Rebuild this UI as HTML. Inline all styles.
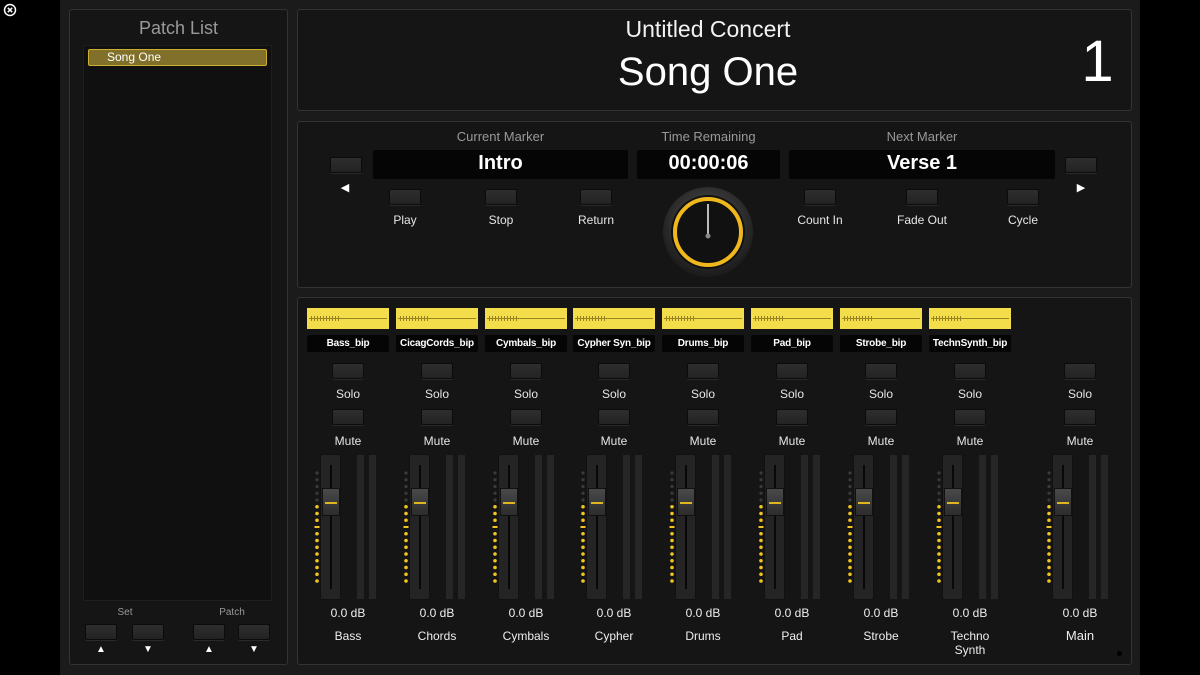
<!DOCTYPE html>
<html><head><meta charset="utf-8">
<style>
*{margin:0;padding:0;box-sizing:border-box}
body{width:1200px;height:675px;background:#000;position:relative;overflow:hidden;font-family:"Liberation Sans","DejaVu Sans",sans-serif;color:#ddd}
.abs{position:absolute}
.main{left:60px;top:0;width:1080px;height:675px;background:#1b1b1b}
.panel{position:absolute;background:#151515;border:1px solid #333;border-radius:3px}
.btn{position:absolute;width:32px;height:16px;background:linear-gradient(#2e2e2e,#232323);border:1px solid #0b0b0b;border-radius:2px;box-shadow:0 1px 0 #2a2a2a}
.t{position:absolute;text-align:center;white-space:nowrap}
.lbl{font-size:12px;color:#e6e6e6}
.ch{position:absolute;top:0;width:82px;height:675px}
.wave{position:absolute;left:0;top:308px;width:82px;height:21px;background:#f3dd4a}
.wave:after{content:"";position:absolute;left:2px;right:2px;top:10px;height:1px;background:#9a8420}
.wave:before{content:"";position:absolute;left:4px;width:30px;top:8px;height:5px;background:repeating-linear-gradient(90deg,#6b5a14 0 1px,transparent 1px 3px);opacity:.7}
.name{position:absolute;left:0;top:335px;width:82px;height:17px;background:#050505;border-radius:2px;font-size:10px;font-weight:bold;color:#fff;text-align:center;line-height:17px;white-space:nowrap;overflow:hidden;letter-spacing:-0.2px}
.track{position:absolute;left:13px;top:454px;width:21px;height:146px;background:#242424;border:1px solid #111;border-radius:2px}
.track:after{content:"";position:absolute;left:9px;top:10px;width:2px;height:124px;background:#080808}
.cap{position:absolute;left:15px;top:488px;width:18px;height:28px;background:linear-gradient(#4a4a4a,#2c2c2c);border:1px solid #111}
.cap:after{content:"";position:absolute;left:2px;right:2px;top:13px;height:2px;background:#e0b520}
.mtr{position:absolute;top:454px;width:9px;height:146px;background:#262626;border:1px solid #151515}
.dots{position:absolute;left:6px;top:468px}
.db{position:absolute;left:0;width:82px;top:606px;text-align:center;font-size:12px;color:#eee}
.cn{position:absolute;left:0;width:82px;top:629px;text-align:center;font-size:12px;color:#eee;line-height:14px}
</style></head><body>
<svg class="abs" style="left:3px;top:3px" width="14" height="14"><circle cx="7" cy="7" r="5.5" fill="none" stroke="#fff" stroke-width="1.5"/><path d="M4.8 4.8L9.2 9.2M9.2 4.8L4.8 9.2" stroke="#fff" stroke-width="1.5"/></svg>
<div class="abs main"></div>

<svg width="0" height="0" style="position:absolute"><defs>
<g id="dd">
<g fill="#3a3a3a"><circle cx="4" cy="5" r="1.6"/><circle cx="4" cy="11.75" r="1.6"/><circle cx="4" cy="18.5" r="1.6"/><circle cx="4" cy="25.25" r="1.6"/><circle cx="4" cy="32" r="1.6"/></g>
<g fill="#f2c51e"><circle cx="4" cy="38.75" r="1.8"/><circle cx="4" cy="45.5" r="1.8"/><circle cx="4" cy="52.25" r="1.8"/><rect x="1.5" y="58" width="5" height="2"/><circle cx="4" cy="65.75" r="1.8"/><circle cx="4" cy="72.5" r="1.8"/><circle cx="4" cy="79.25" r="1.8"/><circle cx="4" cy="86" r="1.8"/><circle cx="4" cy="92.75" r="1.8"/><circle cx="4" cy="99.5" r="1.8"/><circle cx="4" cy="106.25" r="1.8"/><circle cx="4" cy="113" r="1.8"/></g>
</g></defs></svg>

<!-- Patch list -->
<div class="panel" style="left:69px;top:9px;width:219px;height:656px"></div>
<div class="t" style="left:69px;width:219px;top:18px;font-size:18px;color:#9a9a9a">Patch List</div>
<div class="abs" style="left:83px;top:45px;width:189px;height:556px;background:#101010;border:1px solid #1e1e1e"></div>
<div class="abs" style="left:88px;top:49px;width:179px;height:17px;background:#80702a;border:1px solid #cdb030;border-radius:2px;font-size:12px;color:#fff;padding-left:18px;line-height:15px">Song One</div>
<div class="t" style="left:105px;width:40px;top:607px;font-size:10px;color:#999">Set</div>
<div class="t" style="left:210px;width:44px;top:607px;font-size:10px;color:#999">Patch</div>
<div class="btn" style="left:85px;top:624px"></div>
<div class="btn" style="left:132px;top:624px"></div>
<div class="btn" style="left:193px;top:624px"></div>
<div class="btn" style="left:238px;top:624px"></div>
<div class="t" style="left:91px;width:20px;top:644px;font-size:10px;color:#fff">▲</div>
<div class="t" style="left:138px;width:20px;top:644px;font-size:10px;color:#fff">▼</div>
<div class="t" style="left:199px;width:20px;top:644px;font-size:10px;color:#fff">▲</div>
<div class="t" style="left:244px;width:20px;top:644px;font-size:10px;color:#fff">▼</div>

<!-- Header -->
<div class="panel" style="left:297px;top:9px;width:835px;height:102px"></div>
<div class="t" style="left:508px;width:400px;top:16px;font-size:23px;color:#f2f2f2">Untitled Concert</div>
<div class="t" style="left:458px;width:500px;top:50px;font-size:40px;color:#fff">Song One</div>
<div class="t" style="left:1070px;width:55px;top:30px;font-size:58px;color:#fff;line-height:64px">1</div>

<!-- Transport -->
<div class="panel" style="left:297px;top:121px;width:835px;height:167px"></div>
<div class="t" style="left:373px;width:255px;top:129px;font-size:13px;color:#999">Current Marker</div>
<div class="t" style="left:637px;width:143px;top:129px;font-size:13px;color:#999">Time Remaining</div>
<div class="t" style="left:789px;width:266px;top:129px;font-size:13px;color:#999">Next Marker</div>
<div class="abs" style="left:373px;top:150px;width:255px;height:29px;background:#050505;border-radius:2px"></div>
<div class="abs" style="left:637px;top:150px;width:143px;height:29px;background:#050505;border-radius:2px"></div>
<div class="abs" style="left:789px;top:150px;width:266px;height:29px;background:#050505;border-radius:2px"></div>
<div class="t" style="left:373px;width:255px;top:152px;font-size:20px;color:#fff;font-weight:bold">Intro</div>
<div class="t" style="left:637px;width:143px;top:152px;font-size:20px;color:#fff;font-weight:bold">00:00:06</div>
<div class="t" style="left:789px;width:266px;top:152px;font-size:20px;color:#fff;font-weight:bold">Verse 1</div>
<div class="btn" style="left:330px;top:157px"></div>
<div class="btn" style="left:1065px;top:157px"></div>
<div class="t" style="left:335px;width:20px;top:181px;font-size:11px;color:#fff">◀</div>
<div class="t" style="left:1071px;width:20px;top:181px;font-size:11px;color:#fff">▶</div>
<div class="btn" style="left:389px;top:189px"></div>
<div class="btn" style="left:485px;top:189px"></div>
<div class="btn" style="left:580px;top:189px"></div>
<div class="btn" style="left:804px;top:189px"></div>
<div class="btn" style="left:906px;top:189px"></div>
<div class="btn" style="left:1007px;top:189px"></div>
<div class="t lbl" style="left:375px;width:60px;top:213px">Play</div>
<div class="t lbl" style="left:471px;width:60px;top:213px">Stop</div>
<div class="t lbl" style="left:566px;width:60px;top:213px">Return</div>
<div class="t lbl" style="left:790px;width:60px;top:213px">Count In</div>
<div class="t lbl" style="left:892px;width:60px;top:213px">Fade Out</div>
<div class="t lbl" style="left:993px;width:60px;top:213px">Cycle</div>
<svg class="abs" style="left:660px;top:186px" width="96" height="94">
<defs><radialGradient id="g" cx="50%" cy="40%" r="60%"><stop offset="0" stop-color="#555"/><stop offset="1" stop-color="#1a1a1a"/></radialGradient></defs>
<circle cx="48" cy="46" r="45" fill="url(#g)"/>
<circle cx="48" cy="46" r="37" fill="#111"/>
<circle cx="48" cy="46" r="33" fill="none" stroke="#f0b81c" stroke-width="4"/>
<path d="M48 18V50" stroke="#bbb" stroke-width="2"/>
<circle cx="48" cy="50" r="2.5" fill="#888"/>
</svg>

<!-- Mixer -->
<div class="panel" style="left:297px;top:297px;width:835px;height:368px"></div>
<div class="abs" style="left:1117px;top:651px;width:5px;height:5px;border-radius:50%;background:#000"></div>

<div class="ch" style="left:307px"><div class="wave"></div><div class="name">Bass_bip</div><div class="btn" style="left:25px;top:363px"></div><div class="t lbl" style="left:0;width:82px;top:387px">Solo</div><div class="btn" style="left:25px;top:409px"></div><div class="t lbl" style="left:0;width:82px;top:434px">Mute</div><svg class="dots" width="8" height="120"><use href="#dd"/></svg><div class="track"></div><div class="cap"></div><div class="mtr" style="left:49px"></div><div class="mtr" style="left:61px"></div><div class="db">0.0 dB</div><div class="cn">Bass</div></div>
<div class="ch" style="left:396px"><div class="wave"></div><div class="name">CicagCords_bip</div><div class="btn" style="left:25px;top:363px"></div><div class="t lbl" style="left:0;width:82px;top:387px">Solo</div><div class="btn" style="left:25px;top:409px"></div><div class="t lbl" style="left:0;width:82px;top:434px">Mute</div><svg class="dots" width="8" height="120"><use href="#dd"/></svg><div class="track"></div><div class="cap"></div><div class="mtr" style="left:49px"></div><div class="mtr" style="left:61px"></div><div class="db">0.0 dB</div><div class="cn">Chords</div></div>
<div class="ch" style="left:485px"><div class="wave"></div><div class="name">Cymbals_bip</div><div class="btn" style="left:25px;top:363px"></div><div class="t lbl" style="left:0;width:82px;top:387px">Solo</div><div class="btn" style="left:25px;top:409px"></div><div class="t lbl" style="left:0;width:82px;top:434px">Mute</div><svg class="dots" width="8" height="120"><use href="#dd"/></svg><div class="track"></div><div class="cap"></div><div class="mtr" style="left:49px"></div><div class="mtr" style="left:61px"></div><div class="db">0.0 dB</div><div class="cn">Cymbals</div></div>
<div class="ch" style="left:573px"><div class="wave"></div><div class="name">Cypher Syn_bip</div><div class="btn" style="left:25px;top:363px"></div><div class="t lbl" style="left:0;width:82px;top:387px">Solo</div><div class="btn" style="left:25px;top:409px"></div><div class="t lbl" style="left:0;width:82px;top:434px">Mute</div><svg class="dots" width="8" height="120"><use href="#dd"/></svg><div class="track"></div><div class="cap"></div><div class="mtr" style="left:49px"></div><div class="mtr" style="left:61px"></div><div class="db">0.0 dB</div><div class="cn">Cypher</div></div>
<div class="ch" style="left:662px"><div class="wave"></div><div class="name">Drums_bip</div><div class="btn" style="left:25px;top:363px"></div><div class="t lbl" style="left:0;width:82px;top:387px">Solo</div><div class="btn" style="left:25px;top:409px"></div><div class="t lbl" style="left:0;width:82px;top:434px">Mute</div><svg class="dots" width="8" height="120"><use href="#dd"/></svg><div class="track"></div><div class="cap"></div><div class="mtr" style="left:49px"></div><div class="mtr" style="left:61px"></div><div class="db">0.0 dB</div><div class="cn">Drums</div></div>
<div class="ch" style="left:751px"><div class="wave"></div><div class="name">Pad_bip</div><div class="btn" style="left:25px;top:363px"></div><div class="t lbl" style="left:0;width:82px;top:387px">Solo</div><div class="btn" style="left:25px;top:409px"></div><div class="t lbl" style="left:0;width:82px;top:434px">Mute</div><svg class="dots" width="8" height="120"><use href="#dd"/></svg><div class="track"></div><div class="cap"></div><div class="mtr" style="left:49px"></div><div class="mtr" style="left:61px"></div><div class="db">0.0 dB</div><div class="cn">Pad</div></div>
<div class="ch" style="left:840px"><div class="wave"></div><div class="name">Strobe_bip</div><div class="btn" style="left:25px;top:363px"></div><div class="t lbl" style="left:0;width:82px;top:387px">Solo</div><div class="btn" style="left:25px;top:409px"></div><div class="t lbl" style="left:0;width:82px;top:434px">Mute</div><svg class="dots" width="8" height="120"><use href="#dd"/></svg><div class="track"></div><div class="cap"></div><div class="mtr" style="left:49px"></div><div class="mtr" style="left:61px"></div><div class="db">0.0 dB</div><div class="cn">Strobe</div></div>
<div class="ch" style="left:929px"><div class="wave"></div><div class="name">TechnSynth_bip</div><div class="btn" style="left:25px;top:363px"></div><div class="t lbl" style="left:0;width:82px;top:387px">Solo</div><div class="btn" style="left:25px;top:409px"></div><div class="t lbl" style="left:0;width:82px;top:434px">Mute</div><svg class="dots" width="8" height="120"><use href="#dd"/></svg><div class="track"></div><div class="cap"></div><div class="mtr" style="left:49px"></div><div class="mtr" style="left:61px"></div><div class="db">0.0 dB</div><div class="cn">Techno<br>Synth</div></div>
<div class="ch" style="left:1039px"><div class="btn" style="left:25px;top:363px"></div><div class="t lbl" style="left:0;width:82px;top:387px">Solo</div><div class="btn" style="left:25px;top:409px"></div><div class="t lbl" style="left:0;width:82px;top:434px">Mute</div><svg class="dots" width="8" height="120"><use href="#dd"/></svg><div class="track"></div><div class="cap"></div><div class="mtr" style="left:49px"></div><div class="mtr" style="left:61px"></div><div class="db">0.0 dB</div><div class="cn" style="font-size:13px">Main</div></div>
</body></html>
